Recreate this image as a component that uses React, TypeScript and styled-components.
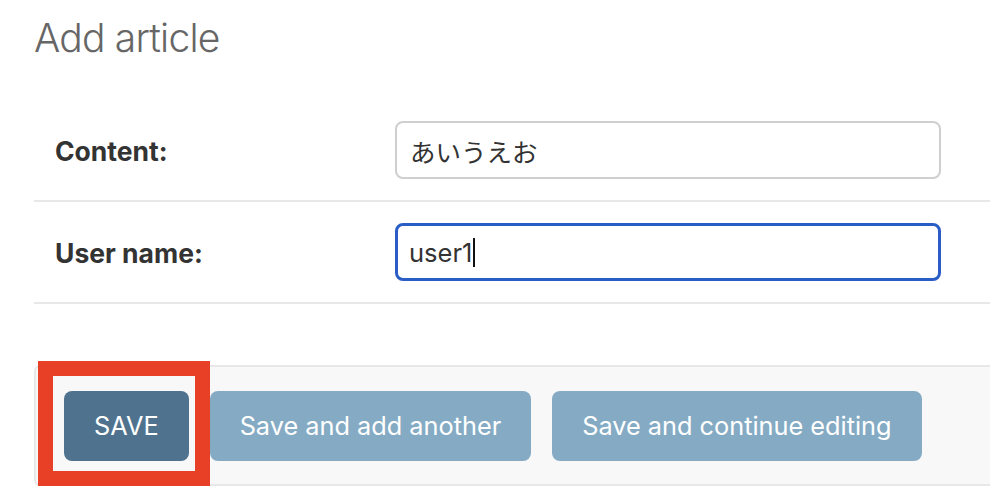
import React from "react";
import styled, { createGlobalStyle } from "styled-components";

const GlobalStyle = createGlobalStyle`
  html, body {
    margin: 0;
    padding: 0;
    background: #fff;
    overflow: hidden;
  }
  body {
    font-family: Inter, "Noto Sans CJK JP", sans-serif;
    color: #333;
  }
`;

const Page = styled.div`
  width: 990px;
  height: 496px;
  padding-left: 34px;
  box-sizing: border-box;
`;

const Title = styled.h1`
  margin: 0;
  height: 100px;
  padding-top: 14px;
  box-sizing: border-box;
  font-size: 39px;
  font-weight: 300;
  color: #666;
  letter-spacing: -0.8px;
`;

const Fieldset = styled.div`
  display: flex;
  flex-direction: column;
`;

const Row = styled.div`
  display: flex;
  align-items: center;
  padding: 21px 0 21px 21px;
  border-bottom: 2px solid #e8e8e8;
`;

const Label = styled.label`
  width: 340px;
  font-size: 26.5px;
  font-weight: 700;
  color: #333;
  padding-top: 2px;
`;

const Field = styled.div<{ $focused?: boolean }>`
  width: 546px;
  height: 58px;
  box-sizing: border-box;
  display: flex;
  align-items: center;
  padding-left: ${(p) => (p.$focused ? "11px" : "13px")};
  border: ${(p) => (p.$focused ? "3px solid #2a5ec6" : "2px solid #cfcfcf")};
  border-radius: 8px;
  font-size: 25.5px;
  color: #333;
  background: #fff;
`;

const Caret = styled.span`
  display: inline-block;
  width: 2px;
  height: 29px;
  margin-left: 1px;
  background: #111;
`;

const SubmitRow = styled.div`
  position: relative;
  margin-top: 61px;
  height: 121px;
  box-sizing: border-box;
  display: flex;
  align-items: center;
  gap: 21px;
  padding-left: 28px;
  background: #f8f8f8;
  border: 2px solid #e8e8e8;
  border-right: none;
  border-radius: 6px 0 0 6px;
`;

const Button = styled.button<{ $primary?: boolean }>`
  height: 70px;
  padding: 0 30px;
  border: none;
  border-radius: 8px;
  font-family: Inter, sans-serif;
  font-size: 25.3px;
  color: #fff;
  background: ${(p) => (p.$primary ? "#4f738f" : "#85abc4")};
  cursor: pointer;
`;

const Highlight = styled.div`
  position: absolute;
  left: 2px;
  top: -6px;
  width: 172px;
  height: 125px;
  box-sizing: border-box;
  border: 15px solid #e84026;
  pointer-events: none;
`;

export default function App() {
  return (
    <Page>
      <GlobalStyle />
      <Title>Add article</Title>
      <Fieldset>
        <Row>
          <Label>Content:</Label>
          <Field>あいうえお</Field>
        </Row>
        <Row>
          <Label>User name:</Label>
          <Field $focused>
            user1
            <Caret />
          </Field>
        </Row>
      </Fieldset>
      <SubmitRow>
        <Button $primary>SAVE</Button>
        <Button>Save and add another</Button>
        <Button>Save and continue editing</Button>
        <Highlight />
      </SubmitRow>
    </Page>
  );
}
